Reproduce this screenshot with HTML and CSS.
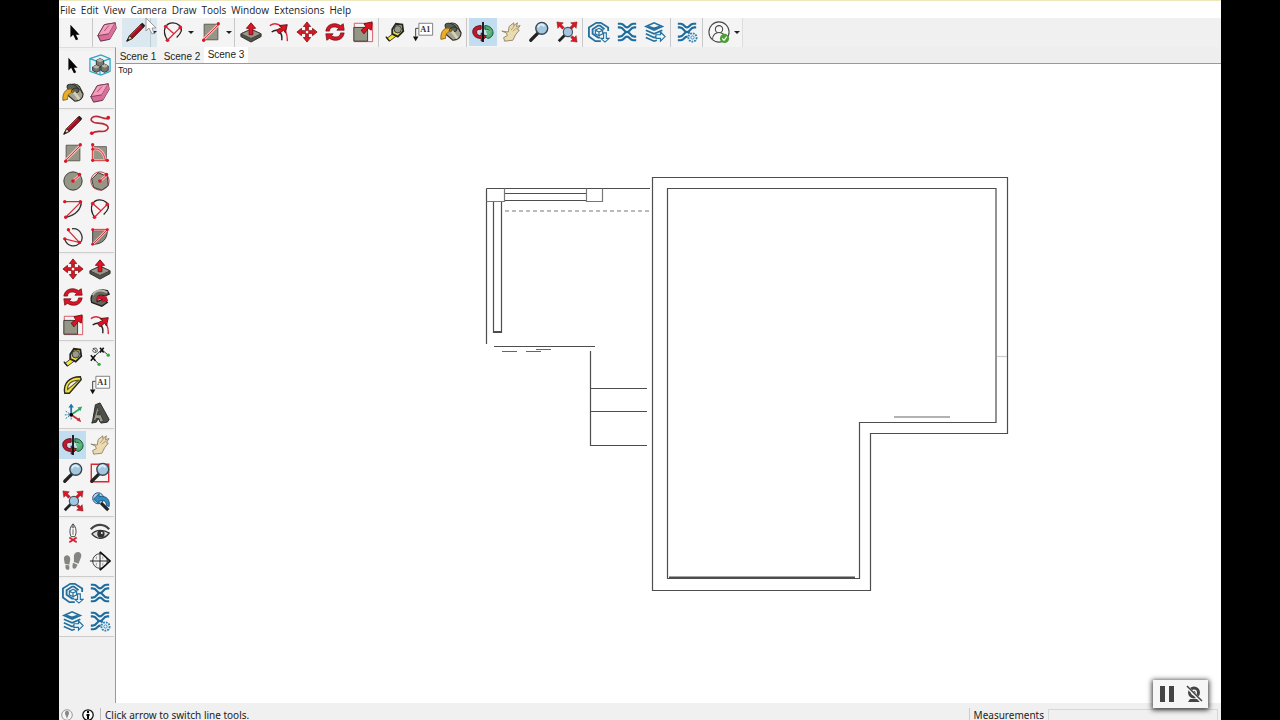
FILE: index.html
```html
<!DOCTYPE html>
<html lang="en">
<head>
<meta charset="utf-8">
<title>Floor plan</title>
<link rel="stylesheet" href="styles.css">
</head>
<body>
<svg class="defs" aria-hidden="true">
<symbol id="select" viewBox="0 0 24 24"><path d="M7 4v14l3-3 3 6 2.500-1-2.500-5h4z" fill="#050505"/></symbol>
<symbol id="eraser" viewBox="0 0 24 24"><path d="M2 16 9 4l12-2 1 6-7 12-10 2z" fill="#d96c98" stroke="#4b2c3a"/><path d="M2 16 9 4l12-2-7 12z" fill="#f49dbd" stroke="#793d55"/><path d="m14 14 1 6 7-12-1-6z" fill="#d9709b"/><path d="m9 11 5-6" stroke="#a34a6c"/></symbol>
<symbol id="pencil" viewBox="0 0 24 24"><path d="m2 22 3-6L18 3l3 3L8 19z" fill="#a90f20" stroke="#3a080b"/><path d="m2 22 3-6 3 3z" fill="#e9c99b" stroke="#222"/><path d="m2 22 1.300-2.600 1.400 1.300z" fill="#111"/><path d="m17 4 3 3 2-2-3-3z" fill="#222"/><path d="M6 16 17 5" stroke="#e33"/></symbol>
<symbol id="arc" viewBox="0 0 24 24"><path d="M6 21C-1 10 4 2 12 2c5 0 10 4 9 9-1 3-3 5-5 7" fill="none" stroke="#222" stroke-width="1.400"/><path d="M6 21 20 7M4 6l9 8" fill="none" stroke="#d72537" stroke-width="1.400"/><g fill="#e01c2c"><circle cx="4" cy="6" r="2"/><circle cx="20" cy="7" r="2"/><circle cx="6" cy="21" r="2"/></g></symbol>
<symbol id="rect" viewBox="0 0 24 24"><path d="M4.500 3.500h15v17h-15z" fill="#969687" stroke="#55554c"/><path d="M4 20 20 4" stroke="#fbb" stroke-width="3"/><path d="M4 20 20 4" stroke="#d52b36"/><g fill="#d81625"><circle cx="4" cy="21" r="1.800"/><circle cx="20" cy="3" r="1.800"/></g></symbol>
<symbol id="rotrect" viewBox="0 0 24 24"><path d="M4 5h15v15H4z" fill="#969687" stroke="#666"/><path d="M4 20V4m0 4c7-2 12 3 14 12M4 20h16" fill="none" stroke="#fbb" stroke-width="3"/><path d="M4 20V4m0 4c7-2 12 3 14 12M4 20h16" fill="none" stroke="#d52b36"/><g fill="#d81625"><circle cx="4" cy="3" r="1.800"/><circle cx="4" cy="8" r="1.500"/><circle cx="4" cy="20" r="1.800"/><circle cx="20" cy="20" r="1.800"/></g></symbol>
<symbol id="circle" viewBox="0 0 24 24"><circle cx="12" cy="12" r="10" fill="#969687" stroke="#34342f"/><path d="m12 12 7-6" stroke="#fbb" stroke-width="3"/><path d="m12 12 7-6" stroke="#d52b36"/><g fill="#d81625"><circle cx="12" cy="12" r="2"/><circle cx="19" cy="5" r="2"/></g></symbol>
<symbol id="polygon" viewBox="0 0 24 24"><circle cx="12" cy="12" r="10" fill="#eee" stroke="#c32f3b"/><path d="m3 10 7-7 10 4 1 10-7 5-9-3z" fill="#969687" stroke="#34342f"/><path d="m12 12 7-6" stroke="#fbb" stroke-width="3"/><path d="m12 12 7-6" stroke="#d52b36"/><g fill="#d81625"><circle cx="12" cy="12" r="2"/><circle cx="19" cy="5" r="2"/></g></symbol>
<symbol id="arc2" viewBox="0 0 24 24"><path d="M21 4c0 8-6 15-17 17" fill="none" stroke="#333" stroke-width="1.500"/><path d="M3 4h18L4 21" fill="none" stroke="#d52b36" stroke-width="1.300"/><g fill="#d81625"><circle cx="3" cy="4" r="1.800"/><circle cx="20" cy="4" r="1.800"/><circle cx="4" cy="21" r="1.800"/></g></symbol>
<symbol id="arc3" viewBox="0 0 24 24"><path d="M11 3c10-1 14 11 8 16-5 5-14 3-16-5" fill="none" stroke="#333" stroke-width="1.400"/><path d="m7 5 12 13L3 14" fill="none" stroke="#d52b36" stroke-width="1.300"/><g fill="#d81625"><circle cx="7" cy="4" r="1.800"/><circle cx="3" cy="14" r="1.800"/><circle cx="19" cy="18" r="1.800"/></g></symbol>
<symbol id="pie" viewBox="0 0 24 24"><path d="M4 5h16c0 9-5 15-16 15z" fill="#87877b" stroke="#333"/><path d="M4 4h16L4 20" fill="none" stroke="#fbb" stroke-width="2.500"/><path d="M4 4h16L4 20" fill="none" stroke="#d52b36"/><g fill="#d81625"><circle cx="4" cy="4" r="1.600"/><circle cx="20" cy="4" r="1.600"/><circle cx="4" cy="20" r="1.600"/></g></symbol>
<symbol id="free" viewBox="0 0 24 24"><path d="M21 5C15 6 11 1 5 3c-6 3-1 7 5 7 7 0 13 3 10 7-4 5-9-1-17 4" fill="none" stroke="#b92a38" stroke-width="1.800"/><g fill="#d81625"><circle cx="3" cy="21" r="2"/><circle cx="21" cy="4" r="2"/></g></symbol>
<symbol id="push" viewBox="0 0 24 24"><path d="m1 14 11-5 11 5v3l-11 6-11-6z" fill="#51514b" stroke="#292925"/><path d="m1 14 11-5 11 5-11 5z" fill="#99998b" stroke="#40403a"/><path d="M10 15V8H7l5-6 5 6h-3v7z" fill="#e11525" stroke="#820b16"/></symbol>
<symbol id="offset" viewBox="0 0 24 24"><path d="M2 5C10-1 22 8 21 22" fill="none" stroke="#d9273d" stroke-width="1.500"/><path d="M4 12c7-5 12 1 11 9" fill="none" stroke="#222" stroke-width="1.600"/><path d="m12 14-3-4 6-3-3-2 9-1-2 9-2-3z" fill="#df1020" stroke="#641016"/></symbol>
<symbol id="move" viewBox="0 0 24 24"><path d="m12 1 4 5h-2.500v4.500H18V8l5 4-5 4v-2.500h-4.500V18H16l-4 5-4-5h2.500v-4.500H6V16l-5-4 5-4v2.500h4.500V6H8z" fill="#df1722" stroke="#6b1015" stroke-width=".8"/><circle cx="12" cy="12" r="1.500" fill="#fff"/></symbol>
<symbol id="rotate" viewBox="0 0 24 24"><path d="M2 11C3 3 12 1 18 5l3-2 1 7h-8l2-2C11 5 6 7 6 11zM22 13c-1 8-10 10-16 6l-3 2-1-7h8l-2 2c5 3 10 1 10-3z" fill="#d91524" stroke="#66121a" stroke-width=".8"/></symbol>
<symbol id="scale" viewBox="0 0 24 24"><path d="M2.500 2.500h20v20h-20z" fill="none" stroke="#d4505b"/><path d="M2 7h15v15H2z" fill="#969687" stroke="#333"/><path d="m13 14-3-4 5-4-2-3 9-2-1 9-3-2z" fill="#df1020" stroke="#641016"/></symbol>
<symbol id="follow" viewBox="0 0 24 24"><path d="M3 18C0 9 8 2 20 5l2 4-5 2c-6-3-9 1-8 6l7-3 4 4-6 4z" fill="#67675f" stroke="#222" stroke-width="1.500"/><path d="M4 10C8 4 14 4 20 7" fill="none" stroke="#b5b5a9" stroke-width="2"/><path d="M8 16c-1-6 6-7 10-4v-3l3 7-8 2 2-3c-3-1-4 0-7 1" fill="#c4182c"/></symbol>
<symbol id="tape" viewBox="0 0 24 24"><path d="m3 19 8-6 3 3-8 6z" fill="#f1e52d" stroke="#333"/><path d="m9 9 4-6 7 1 1 7-6 6-6-3z" fill="#e3dc52" stroke="#252522" stroke-width="2"/><circle cx="15" cy="9" r="4" fill="#9a9a8b" stroke="#33332b"/><path d="m2 17 4 5" stroke="#222" stroke-width="1.500"/></symbol>
<symbol id="text" viewBox="0 0 24 24"><path d="M7.500 2.500h15v13h-15z" fill="#fff" stroke="#777"/><path d="M7 8H4v9" fill="none" stroke="#333"/><path d="m1 17 3 5 3-5z" fill="#111"/></symbol>
<symbol id="paint" viewBox="0 0 24 24"><path d="M7 9C7 2 15 0 19 5l4 8c0 5-4 8-9 8l-7-6z" fill="#a3a28f" stroke="#303029" stroke-width="1.300"/><ellipse cx="12" cy="7" rx="7" ry="4" transform="rotate(25 12 7)" fill="#596052" stroke="#252520"/><path d="M12 9C6 5 0 11 1 20l5-1c0-5 2-7 6-8z" fill="#e9ad27" stroke="#856420"/><path d="m13 11 6 8" stroke="#d5d1b8" stroke-width="3"/><path d="M10 11c1-6 10-6 12 1" fill="none" stroke="#292925"/></symbol>
<symbol id="orbit" viewBox="0 0 24 24"><path d="M10 5C3 5 0 9 1 13c1 5 6 6 9 6v3l6-5-6-4v3c-3 0-5-1-5-4 0-2 1-3 5-3z" fill="#c5162a" stroke="#5a101b"/><path d="M14 5c6 0 9 4 9 8 0 3-3 6-6 6l-3-3c3 0 5-1 5-4s-2-3-5-3z" fill="#51ad72" stroke="#194c2d"/><path d="m15 10 7 1-5 6z" fill="#65bb82"/><path d="M12 1v22" stroke="#111" stroke-width="2"/></symbol>
<symbol id="pan" viewBox="0 0 24 24"><path d="m2 11 7 1 1-6 5-4v3l4-3-1 4 4-1-3 4 2 1-4 5-3 6-9 1-1-4 4-2-1-3z" fill="#ecdab0" stroke="#8f8468"/><path d="m12 10 4-5m-2 6 5-4" stroke="#aa9871"/></symbol>
<symbol id="zoom" viewBox="0 0 24 24"><path d="m3 21 8-8" stroke="#222" stroke-width="3.500" stroke-linecap="round"/><circle cx="15" cy="8" r="6.500" fill="#a4c6df" stroke="#374550" stroke-width="1.500"/><path d="M11 7c1-4 5-4 7-1" fill="none" stroke="#dceef8" stroke-width="2"/></symbol>
<symbol id="zoomwin" viewBox="0 0 24 24"><path d="M2.500 2.500h19v19h-19z" fill="none" stroke="#db2732" stroke-width="1.500"/><use href="#zoom"/></symbol>
<symbol id="extents" viewBox="0 0 24 24"><path d="m3 22 7-7" stroke="#222" stroke-width="3"/><circle cx="13" cy="12" r="5" fill="#a4c6df" stroke="#425666" stroke-width="1.300"/><g fill="#dc1725" stroke="#70151b" stroke-width=".5"><path d="m1 1 7 1-2 2 3 3-2 2-3-3-2 2zM23 1l-1 7-2-2-3 3-2-2 3-3-2-2zM23 23l-7-1 2-2-2-2 2-2 2 2 2-2z"/></g></symbol>
<symbol id="prev" viewBox="0 0 24 24"><path d="m13 14 8 8" stroke="#222" stroke-width="3.500"/><circle cx="10" cy="9" r="6" fill="#acd7ee" stroke="#347"/><path d="m5 10 6-6v3c9-1 12 4 11 11l-3-1c0-5-3-6-8-5v3z" fill="#348bc2" stroke="#18577c"/></symbol>
<symbol id="hex" viewBox="0 0 24 24"><g fill="none" stroke="#23709f" stroke-width="2"><path d="M14 22H8L1 17V7l8-5h5l8 5v4"/><path d="M13 18h-2l-6-4V9l6-4h2l5 4"/><path d="m12 8 4 2v4l-4 2-4-2v-4zM12 12v4m0-4 4-2m-4 2-4-2" stroke-width="1.300"/></g><path d="M17 13h3v6h3l-4.500 4L14 19h3z" fill="#edf8ff" stroke="#23709f" stroke-width="1.200"/></symbol>
<symbol id="xware" viewBox="0 0 24 24"><g fill="none" stroke="#1d6c9d" stroke-width="2.300"><path d="M2 3h3c4 0 4 4 7 4s3-4 7-4h3M2 7h2c5 0 4 5 8 5s3-5 8-5h2"/><path d="M2 21h3c4 0 4-4 7-4s3 4 7 4h3M2 17h2c5 0 4-5 8-5s3 5 8 5h2"/></g></symbol>
<symbol id="layers" viewBox="0 0 24 24"><g fill="none" stroke="#23709f" stroke-width="1.800"><path d="m2 6 9-4 9 4-9 4zM5 6l6 2 6-2M2 10l9 4 9-4M2 14l9 4 3-1M2 18l9 4 3-1"/></g><path d="M13 15h5v-3l5 5-5 5v-3h-5z" fill="#edf8ff" stroke="#23709f" stroke-width="1.300"/></symbol>
<symbol id="xgear" viewBox="0 0 24 24"><use href="#xware"/><circle cx="18" cy="18" r="5.500" fill="#f4fbff"/><circle cx="18" cy="18" r="4.500" fill="#edf8ff" stroke="#3582ad" stroke-width="2" stroke-dasharray="2 1"/><circle cx="18" cy="18" r="1.800" fill="none" stroke="#3582ad"/></symbol>
<symbol id="account" viewBox="0 0 24 24"><g fill="#f8f8f8" stroke="#49494d" stroke-width="1.200"><circle cx="12" cy="12" r="11"/><circle cx="12" cy="9" r="4"/><path d="M5 20c0-10 14-10 14 0"/></g><circle cx="18" cy="19" r="5" fill="#4c9e35"/><path d="m15.500 19 2 2 3-4" fill="none" stroke="#fff" stroke-width="1.300"/></symbol>
<symbol id="component" viewBox="0 0 24 24"><path d="m1 5 12-4 10 4v14l-10 4-12-4zM1 5l11 4 11-4M12 9v14" fill="#e1f4f9" stroke="#2aa2c2" stroke-width="1.300"/><g fill="#77776d" stroke="#30302c"><path d="m8 7 4-2 4 2v5l-4 2-4-2zM4 14l4-2 4 2v4l-4 2-4-2zM13 13l4-2 4 2v5l-4 2-4-2z"/></g><path d="m8 7 4 2 4-2-4-2zM4 14l4 2 4-2-4-2zM13 13l4 2 4-2-4-2z" fill="#b5b5a9"/></symbol>
<symbol id="dimension" viewBox="0 0 24 24"><path d="m4 13 10-9 7 6M4 13l7 7" fill="none" stroke="#333"/><path d="m2 10 5 6m-5 0 5-6m5-8 4 5m-4 0 4-5" stroke="#111" stroke-width="1.700"/><path d="M4 3q5-2 5 2c0 4-6 1-5 0 1-3 5 0 3 2" fill="none" stroke="#444"/><g fill="#35a63b"><circle cx="21" cy="10" r="1.800"/><circle cx="11" cy="20" r="1.800"/></g></symbol>
<symbol id="protractor" viewBox="0 0 24 24"><path d="M3 21C1 10 8 3 20 3l1 3-13 15z" fill="#f0df45" stroke="#29291d" stroke-width="1.500"/><path d="M6 17c0-6 4-10 12-10z" fill="#f4f4f4" stroke="#5d5721" stroke-width="1.200"/></symbol>
<symbol id="axes" viewBox="0 0 24 24"><g stroke-width="2"><path d="M10 14V3" stroke="#2475ae"/><path d="m10 14 10-7" stroke="#31a665"/><path d="m10 14 9 6" stroke="#c82e41"/></g><path d="m7 6 3-4 3 4z" fill="#2475ae"/><path d="m17 6 5-1-2 5z" fill="#31a665"/><path d="m16 20 5 2-2-5z" fill="#c82e41"/><path d="M4 10l6 4m-6 4 6-4m-7 0h7m0 0v6" stroke="#267294" stroke-dasharray="2 1"/><circle cx="10" cy="14" r="2"/></symbol>
<symbol id="text3d" viewBox="0 0 24 24"><path d="m4 20 3-17 5-2 10 18-2 3-7 1-3-5-2 4-5 1z" fill="#4f4f49" stroke="#22221f"/><path d="m5 19 4-14 7 16-4 1-1-4H8l-1 3zM9 14h3l-2-4z" fill="#99998a" fill-rule="evenodd" stroke="#393934"/></symbol>
<symbol id="camera" viewBox="0 0 24 24"><path d="M12 2c4 4 4 10 2 14h-4C8 12 8 6 12 2" fill="#fff" stroke="#333"/><circle cx="12" cy="5" r="2" fill="#888"/><path d="M12 8v6" stroke="#555"/><path d="m8 22 8-5m-8 0 8 5" stroke="#d72031" stroke-width="2"/></symbol>
<symbol id="eye" viewBox="0 0 24 24"><path d="M2 8c6-7 15-6 20 0" fill="none" stroke="#444" stroke-width="2.500"/><path d="M3 13c5-5 13-5 19-1-5 7-13 8-19 1" fill="#ddd" stroke="#333" stroke-width="1.500"/><circle cx="13" cy="13" r="4" fill="#333"/><circle cx="14" cy="12" r="1" fill="#fff"/></symbol>
<symbol id="feet" viewBox="0 0 24 24"><g fill="#85857f"><path d="M2 9c1-5 7-4 7 1l-1 6-5-1zM4 16l4 1v4c-3 2-5-1-4-5M13 6c2-6 9-4 8 1l-3 8-5-2zM12 14l5 2-2 4c-4 2-4-2-3-6"/></g></symbol>
<symbol id="section" viewBox="0 0 24 24"><circle cx="12" cy="12" r="8" fill="#f4f4f4" stroke="#333"/><path d="m12 2 11 10-11 10" fill="none" stroke="#111" stroke-width="1.800"/><path d="M1 12h22M12 2v20" stroke="#111"/><path d="M8 7v3M15 7v3M8 14v3M15 14v3" stroke="#999"/></symbol>
</svg>
<main class="app">
<nav class="menubar" aria-label="Main menu"><button>File</button><button>Edit</button><button>View</button><button>Camera</button><button>Draw</button><button>Tools</button><button>Window</button><button>Extensions</button><button>Help</button></nav>
<div class="toolbar" role="toolbar" aria-label="Tools">
<div class="set first"><button class="tool" aria-label="Select"><svg><use href="#select"/></svg></button></div>
<div class="set edit"><button class="tool" aria-label="Eraser"><svg><use href="#eraser"/></svg></button><div class="split hovered"><button class="tool" aria-label="Line"><svg><use href="#pencil"/></svg></button><button class="more" aria-label="More line tools"></button></div><div class="split"><button class="tool" aria-label="Arc"><svg><use href="#arc"/></svg></button><button class="more" aria-label="More arc tools"></button></div><div class="split"><button class="tool" aria-label="Rectangle"><svg><use href="#rect"/></svg></button><button class="more" aria-label="More shapes"></button></div></div>
<div class="set"><button class="tool" aria-label="Push pull"><svg><use href="#push"/></svg></button><button class="tool" aria-label="Offset"><svg><use href="#offset"/></svg></button><button class="tool" aria-label="Move"><svg><use href="#move"/></svg></button><button class="tool" aria-label="Rotate"><svg><use href="#rotate"/></svg></button><button class="tool" aria-label="Scale"><svg><use href="#scale"/></svg></button></div>
<div class="set"><button class="tool" aria-label="Tape measure"><svg><use href="#tape"/></svg></button><button class="tool" aria-label="Text"><svg viewBox="0 0 24 24"><use href="#text"/><text x="9" y="12" class="glyph">A1</text></svg></button><button class="tool" aria-label="Paint bucket"><svg><use href="#paint"/></svg></button></div>
<div class="set"><button class="tool active" aria-label="Orbit"><svg><use href="#orbit"/></svg></button><button class="tool" aria-label="Pan"><svg><use href="#pan"/></svg></button><button class="tool" aria-label="Zoom"><svg><use href="#zoom"/></svg></button><button class="tool" aria-label="Zoom extents"><svg><use href="#extents"/></svg></button></div>
<div class="set"><button class="tool" aria-label="3D Warehouse"><svg><use href="#hex"/></svg></button><button class="tool" aria-label="Extension Warehouse"><svg><use href="#xware"/></svg></button><button class="tool" aria-label="Send to layout"><svg><use href="#layers"/></svg></button></div>
<div class="set"><button class="tool" aria-label="Extension manager"><svg><use href="#xgear"/></svg></button></div>
<div class="set last"><div class="split"><button class="tool" aria-label="Account"><svg><use href="#account"/></svg></button><button class="more" aria-label="Account menu"></button></div></div>
<svg class="cursor" viewBox="0 0 12 18" aria-hidden="true"><path d="M1 1v13l3-3 3 6 2-1-2-5h4z" fill="#fff" stroke="#999"/></svg>
</div>
<div class="workspace">
<aside class="palette" aria-label="Large tool set">
<div class="pack"><button class="tool" aria-label="Select"><svg><use href="#select"/></svg></button><button class="tool" aria-label="Make component"><svg><use href="#component"/></svg></button><button class="tool" aria-label="Paint bucket"><svg><use href="#paint"/></svg></button><button class="tool" aria-label="Eraser"><svg><use href="#eraser"/></svg></button></div>
<div class="pack"><button class="tool" aria-label="Line"><svg><use href="#pencil"/></svg></button><button class="tool" aria-label="Freehand"><svg><use href="#free"/></svg></button><button class="tool" aria-label="Rectangle"><svg><use href="#rect"/></svg></button><button class="tool" aria-label="Rotated rectangle"><svg><use href="#rotrect"/></svg></button><button class="tool" aria-label="Circle"><svg><use href="#circle"/></svg></button><button class="tool" aria-label="Polygon"><svg><use href="#polygon"/></svg></button><button class="tool" aria-label="Arc"><svg><use href="#arc2"/></svg></button><button class="tool" aria-label="Two point arc"><svg><use href="#arc"/></svg></button><button class="tool" aria-label="Three point arc"><svg><use href="#arc3"/></svg></button><button class="tool" aria-label="Pie"><svg><use href="#pie"/></svg></button></div>
<div class="pack"><button class="tool" aria-label="Move"><svg><use href="#move"/></svg></button><button class="tool" aria-label="Push pull"><svg><use href="#push"/></svg></button><button class="tool" aria-label="Rotate"><svg><use href="#rotate"/></svg></button><button class="tool" aria-label="Follow me"><svg><use href="#follow"/></svg></button><button class="tool" aria-label="Scale"><svg><use href="#scale"/></svg></button><button class="tool" aria-label="Offset"><svg><use href="#offset"/></svg></button></div>
<div class="pack"><button class="tool" aria-label="Tape measure"><svg><use href="#tape"/></svg></button><button class="tool" aria-label="Dimension"><svg><use href="#dimension"/></svg></button><button class="tool" aria-label="Protractor"><svg><use href="#protractor"/></svg></button><button class="tool" aria-label="Text"><svg viewBox="0 0 24 24"><use href="#text"/><text x="9" y="12" class="glyph">A1</text></svg></button><button class="tool" aria-label="Axes"><svg><use href="#axes"/></svg></button><button class="tool" aria-label="3D text"><svg><use href="#text3d"/></svg></button></div>
<div class="pack"><button class="tool active" aria-label="Orbit"><svg><use href="#orbit"/></svg></button><button class="tool" aria-label="Pan"><svg><use href="#pan"/></svg></button><button class="tool" aria-label="Zoom"><svg><use href="#zoom"/></svg></button><button class="tool" aria-label="Zoom window"><svg><use href="#zoomwin"/></svg></button><button class="tool" aria-label="Zoom extents"><svg><use href="#extents"/></svg></button><button class="tool" aria-label="Previous view"><svg><use href="#prev"/></svg></button></div>
<div class="pack"><button class="tool" aria-label="Position camera"><svg><use href="#camera"/></svg></button><button class="tool" aria-label="Look around"><svg><use href="#eye"/></svg></button><button class="tool" aria-label="Walk"><svg><use href="#feet"/></svg></button><button class="tool" aria-label="Section plane"><svg><use href="#section"/></svg></button></div>
<div class="pack"><button class="tool" aria-label="3D Warehouse"><svg><use href="#hex"/></svg></button><button class="tool" aria-label="Extension Warehouse"><svg><use href="#xware"/></svg></button><button class="tool" aria-label="Send to layout"><svg><use href="#layers"/></svg></button><button class="tool" aria-label="Extension manager"><svg><use href="#xgear"/></svg></button></div>
</aside>
<section class="document">
<div class="tabs" role="tablist"><button role="tab" aria-selected="false">Scene 1</button><button role="tab" aria-selected="false">Scene 2</button><button role="tab" aria-selected="true">Scene 3</button></div>
<div class="viewport">
<span class="viewname">Top</span>
<svg class="plan" viewBox="116 64 1105 639" role="img" aria-label="Floor plan, top view">
<g fill="none" stroke="#4d4d4d" stroke-width="1.200">
<path d="M652.500 177.500H1007.500V433.500H870.500V590.500H652.500zM667.500 188.500H996V422.500H859.500V578.500H667.500z"/>
<path d="M486.500 188.500H650M486.500 188.500V344M504 193.500H586M504 200.500H586M493.500 201V332.500H501.500V201M494 331.500H501M494 346.500H595M590.500 351V445.500H647M590.500 388.500H647M590.500 411.500H647"/>
<path d="M486.500 201.500H504.500V188.500M586.500 188.500V201.500H602.500V188.500" stroke="#777"/>
<path d="M502 351.500H517M526 351.500H541M536 349.500H551M894 417H950" stroke="#666"/>
<path d="M669 577.500H855" stroke-width="2"/>
<path d="M505 211H652" stroke="#777" stroke-dasharray="4 3"/>
<path d="M997 356.500H1007" stroke="#ccc"/>
</g>
</svg>
</div>
</section>
</div>
<footer class="status">
<button class="info" aria-label="Geolocation"><svg viewBox="0 0 12 12"><circle cx="6" cy="6" r="5.300" fill="#f5f5f5" stroke="#999"/><path d="M4 4c0-3 4-3 4 0 0 2-1 2-2 6-1-4-2-4-2-6" fill="#888"/></svg></button>
<button class="info" aria-label="Credits"><svg viewBox="0 0 12 12"><circle cx="6" cy="6" r="5.200" fill="#fff" stroke="#111" stroke-width="1.300"/><circle cx="6" cy="3" r="1.200"/><path d="M4.500 5h3v2H7v3H5V7h-.5z"/></svg></button>
<span class="hint">Click arrow to switch line tools.</span>
<label for="measure">Measurements</label><input id="measure" type="text">
</footer>
<div class="recorder"><button aria-label="Pause"><svg viewBox="0 0 18 18"><path d="M2 1h5v16H2zM11 1h5v16h-5z" fill="#444"/></svg></button><button aria-label="Camera off"><svg viewBox="0 0 18 18"><circle cx="9" cy="7.500" r="4.500" fill="none" stroke="#444" stroke-width="3"/><circle cx="9" cy="7.500" r="1.500" fill="#444"/><path d="M3 17l2-3h8l2 3z" fill="#444"/><path d="M1 1l15 15" stroke="#f6f6f6" stroke-width="3"/><path d="M2 1l15 15" stroke="#444" stroke-width="1.500"/></svg></button></div>
</main>
</body>
</html>
```
FILE: styles.css
```css
* { box-sizing: border-box; }
body { margin: 0; background: #000; color: #222; font: 10px/14px "Noto Sans", sans-serif; }
button { padding: 0; border: 0; background: none; color: inherit; font: inherit; }
.defs { position: absolute; width: 0; height: 0; }
.glyph { font: bold 9px "Liberation Serif", serif; fill: #333; }
.app { position: relative; display: flex; flex-direction: column; height: 100vh; margin: 0 59px; overflow: hidden; background: #f0f0f0; }
.menubar { display: flex; flex: none; gap: 5px; height: 18px; padding: 1px 1px 0; border-top: 1px solid #eee8bd; background: #fff; font-family: "Open Sans", sans-serif; }
.toolbar { position: relative; display: flex; flex: none; height: 29px; padding-left: 2px; background: #f0f0f0; }
.set { display: flex; flex: none; padding: 0 1px; border-right: 1px solid #c8c8c8; background: #f4f4f4; }
.set + .set + .set { padding-left: 2px; }
.set.first { padding: 0 3px 0 0; }
.set.edit { padding: 0 1px 0 0; }
.last { border-color: #ddd; }
.split { display: flex; }
.split + .split { margin-left: 2px; }
.tool { display: flex; align-items: center; justify-content: center; flex: none; width: 28px; height: 28px; }
.tool svg { width: 22px; height: 22px; }
.active { background: #c2ddf0; }
.hovered { margin-left: 1px; background: #dce8f0; }
.more { width: 8px; }
.more::before { content: ""; display: block; margin: 0 1px; border: 3px solid transparent; border-top: 3px solid #222; border-bottom: 0; }
.hovered .more { width: 7px; border-left: 1px solid #bdcbd5; }
.hovered .more::before { margin: 0; }
.cursor { position: absolute; left: 86px; top: -1px; width: 12px; height: 18px; }
.workspace { display: flex; flex: 1; min-height: 0; }
.palette { flex: none; width: 57px; padding-top: 3px; border-top: 1px solid #ddd; border-right: 1px solid #999; background: #f0f0f0; overflow: hidden; }
.pack { display: grid; grid-template-columns: 27px 28px; width: 55px; padding-bottom: 1px; margin-bottom: 2px; border-bottom: 1px solid #ccc; background: #f4f4f4; }
.pack .tool { width: auto; }
.document { display: flex; flex: 1; flex-direction: column; min-width: 0; }
.tabs { display: flex; flex: none; height: 17px; border-bottom: 1px solid #999; background: #eee; font: 10px/14px "Liberation Sans", sans-serif; }
.tabs button { width: 44px; padding-top: 3px; background: #f2f2f2; color: #222; }
.tabs button[aria-selected="true"] { padding: 0; background: #fff; }
.viewport { position: relative; flex: 1; min-height: 0; background: #fff; }
.viewname { position: absolute; left: 2px; top: 0; font: 9px/12px "Liberation Sans", sans-serif; }
.plan { display: block; width: 100%; height: 100%; }
.status { display: flex; flex: none; align-items: center; height: 17px; padding: 6px 3px 0 2px; }
.info { flex: none; width: 12px; height: 12px; margin-right: 9px; }
.info + .info { margin-right: 6px; }
.info svg { display: block; width: 12px; height: 12px; }
.hint { padding-left: 4px; border-left: 1px solid #bbb; white-space: nowrap; }
.status label { margin-left: auto; padding: 0 4px; border-left: 1px solid #ccc; }
.status input { width: 170px; height: 12px; padding: 0 4px; border: 1px solid #cfd9df; background: #f0f0f0; font: inherit; }
.recorder { position: absolute; right: 13px; bottom: 12px; display: flex; align-items: center; justify-content: space-around; width: 55px; height: 28px; background: #f6f6f6; box-shadow: 0 1px 5px 1px #333; }
.recorder svg { display: block; width: 18px; height: 18px; }
```
